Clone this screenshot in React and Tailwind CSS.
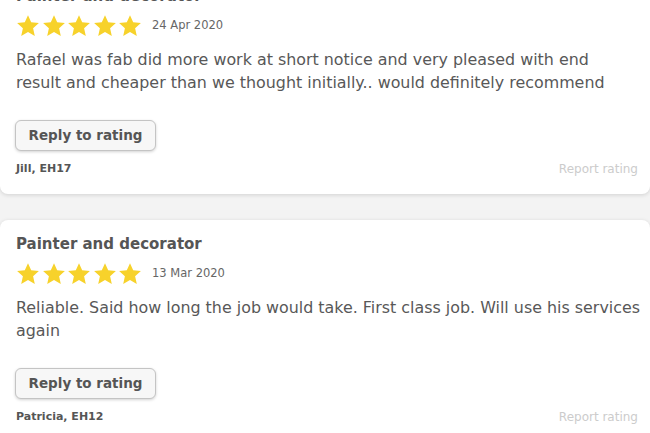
import React from "react";

const Star = () => (
  <svg width="24" height="24" viewBox="0 0 24 24" className="block">
    <path
      d="M12 1.2l3.2 7.1 7.7.8-5.8 5.2 1.7 7.6L12 18l-6.8 3.9 1.7-7.6L1.1 9.1l7.7-.8z"
      fill="#f7d22b"
    />
  </svg>
);

const Card = ({ title, date, lines, name }) => (
  <div className="bg-white rounded-lg shadow-[0_1px_4px_rgba(0,0,0,0.14)] pl-4 pr-3 pt-[14px] pb-[17px]">
    <div className="text-[15px] leading-[20px] font-bold text-[#555555]">{title}</div>
    <div className="flex items-center mt-2 h-6">
      <div className="flex gap-[1.5px]">
        <Star />
        <Star />
        <Star />
        <Star />
        <Star />
      </div>
      <span className="ml-[10px] text-[11.5px] text-[#666666]">{date}</span>
    </div>
    <div className="mt-[10px] text-[15.9px] leading-[23px] text-[#585858]">
      {lines.map((l, i) => (
        <div key={i} className="whitespace-nowrap">{l}</div>
      ))}
    </div>
    <div className="mt-[26px]">
      <button className="h-[31px] w-[141px] rounded-md border border-[#c4c4c4] bg-[#f7f7f7] shadow-[0_1px_3px_rgba(0,0,0,0.18)] text-[13.5px] font-bold text-[#555555] ml-[-1px]">
        Reply to rating
      </button>
    </div>
    <div className="mt-[10px] flex justify-between items-center h-4">
      <span className="text-[11px] font-bold text-[#555555]">{name}</span>
      <span className="text-[12px] text-[#cccccc]">Report rating</span>
    </div>
  </div>
);

export default function App() {
  return (
    <div
      className="w-[650px] h-[433px] overflow-hidden bg-[#f3f3f3]"
      style={{ fontFamily: '"DejaVu Sans", sans-serif' }}
    >
      <div className="mt-[-28px] flex flex-col gap-[26px]">
        <Card
          title="Painter and decorator"
          date="24 Apr 2020"
          lines={[
            "Rafael was fab did more work at short notice and very pleased with end",
            "result and cheaper than we thought initially.. would definitely recommend",
          ]}
          name="Jill, EH17"
        />
        <Card
          title="Painter and decorator"
          date="13 Mar 2020"
          lines={[
            "Reliable. Said how long the job would take. First class job. Will use his services",
            "again",
          ]}
          name="Patricia, EH12"
        />
      </div>
    </div>
  );
}
